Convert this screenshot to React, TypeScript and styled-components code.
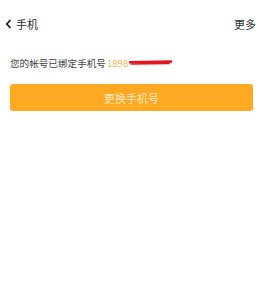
import styled, { createGlobalStyle } from "styled-components";

const GlobalStyle = createGlobalStyle`
  html, body {
    margin: 0;
    padding: 0;
    background: #ffffff;
  }
  body {
    font-family: "Noto Sans CJK SC", "Liberation Sans", sans-serif;
  }
`;

function App() {
  return (
    <>
      <GlobalStyle />
      <Page>
        <Header>
          <Back>
            <svg width="7" height="10" viewBox="0 0 7 10">
              <path d="M5.5 1 L1.8 5 L5.5 9" fill="none" stroke="#222" strokeWidth="1.8" />
            </svg>
            <Title>手机</Title>
          </Back>
          <More>更多</More>
        </Header>
        <Info>
          您的帐号已绑定手机号<Phone>1898</Phone>
          <Scribble width="44" height="8" viewBox="0 0 44 8">
            <path d="M1 3.2 L42 2.6" stroke="#e3161e" strokeWidth="2.6" strokeLinecap="round" />
            <path d="M2 5 L40 4.4" stroke="#e3161e" strokeWidth="1.6" strokeLinecap="round" />
          </Scribble>
        </Info>
        <ChangeButton>更换手机号</ChangeButton>
      </Page>
    </>
  );
}

export default App;

const Page = styled.div`
  width: 259px;
  height: 299px;
  background: #fff;
  display: flex;
  flex-direction: column;
`;

const Header = styled.div`
  height: 24px;
  margin-top: 12px;
  padding: 0 3px 0 5px;
  display: flex;
  align-items: center;
  justify-content: space-between;
`;

const Back = styled.div`
  display: flex;
  align-items: center;
  gap: 4px;
`;

const Title = styled.span`
  font-size: 11px;
  color: #2a2a2a;
`;

const More = styled.span`
  font-size: 11px;
  color: #333;
`;

const Info = styled.div`
  margin-top: 20px;
  padding-left: 10px;
  font-size: 9.6px;
  color: #444;
  display: flex;
  align-items: center;
  height: 14px;
`;

const Phone = styled.span`
  color: #f3b65a;
  margin-left: 1px;
`;

const Scribble = styled.svg`
  display: block;
  margin-left: 1px;
  margin-top: -1px;
`;

const ChangeButton = styled.div`
  margin: 14px 6px 0 10px;
  height: 27px;
  border-radius: 3px;
  background: #ffa922;
  color: #fde8c4;
  font-size: 11px;
  display: flex;
  align-items: center;
  justify-content: center;
`;
